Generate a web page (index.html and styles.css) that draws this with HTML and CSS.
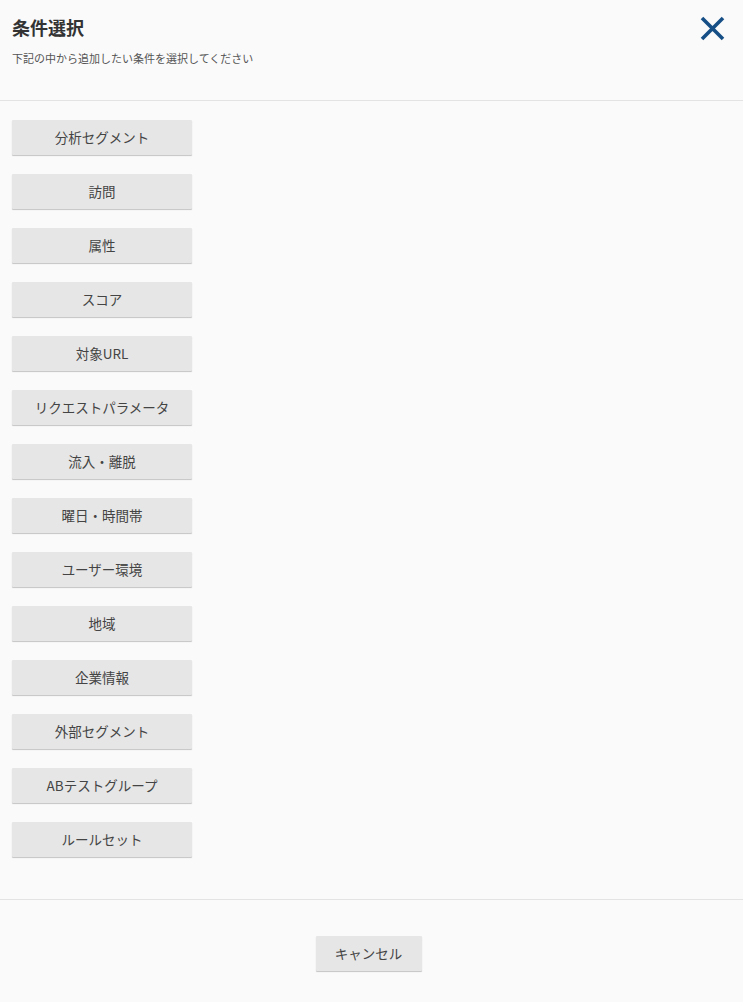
FILE: index.html
```html
<!DOCTYPE html>
<html lang="ja">
<head>
<meta charset="utf-8">
<link rel="stylesheet" href="styles.css">
</head>
<body>
<div class="dialog">
  <header class="head">
    <div class="head-text">
      <h1 class="title">条件選択</h1>
      <p class="sub">下記の中から追加したい条件を選択してください</p>
    </div>
    <button class="close" aria-label="close">
      <svg width="26" height="26" viewBox="0 0 26 26"><path d="M3 3 L24 24 M24 3 L3 24" stroke="#164f85" stroke-width="3.6" fill="none"/></svg>
    </button>
  </header>
  <main class="list">
    <button class="opt">分析セグメント</button>
    <button class="opt">訪問</button>
    <button class="opt">属性</button>
    <button class="opt">スコア</button>
    <button class="opt">対象URL</button>
    <button class="opt">リクエストパラメータ</button>
    <button class="opt">流入・離脱</button>
    <button class="opt">曜日・時間帯</button>
    <button class="opt">ユーザー環境</button>
    <button class="opt">地域</button>
    <button class="opt">企業情報</button>
    <button class="opt">外部セグメント</button>
    <button class="opt">ABテストグループ</button>
    <button class="opt">ルールセット</button>
  </main>
  <footer class="foot">
    <button class="opt cancel">キャンセル</button>
  </footer>
</div>
</body>
</html>
```

FILE: styles.css
```css
html, body {
  margin: 0;
  padding: 0;
  background: #fafafa;
  font-family: "Noto Sans CJK JP", "Noto Sans", sans-serif;
  color: #333;
}
.dialog {
  width: 743px;
  min-height: 1002px;
  display: flex;
  flex-direction: column;
}
.head {
  height: 100px;
  border-bottom: 1px solid #e3e3e3;
  display: flex;
  justify-content: space-between;
  align-items: flex-start;
  padding: 0 12px;
}
.title {
  margin: 14px 0 0;
  font-size: 18px;
  font-weight: 700;
  line-height: 26px;
  color: #333;
}
.sub {
  margin: 10px 0 0;
  font-size: 11px;
  line-height: 16px;
  color: #555;
}
.close {
  background: none;
  border: none;
  padding: 0;
  margin: 15px 6px 0 0;
  width: 26px;
  height: 26px;
  cursor: pointer;
}
.close svg { display: block; }
.list {
  display: flex;
  flex-direction: column;
  align-items: flex-start;
  gap: 19px;
  padding: 19px 12px 42px;
  border-bottom: 1px solid #e3e3e3;
}
.opt {
  width: 180px;
  height: 35px;
  border: none;
  border-radius: 1px;
  background: #e6e6e6;
  box-shadow: 0 1px 1px rgba(0,0,0,0.22);
  font-family: "Noto Sans CJK JP", "Noto Sans", sans-serif;
  font-size: 13.5px;
  color: #444;
  padding: 0 0 2px;
  cursor: pointer;
}
.foot {
  display: flex;
  justify-content: center;
  padding-top: 36px;
}
.cancel {
  width: 106px;
  margin-right: 6px;
}
```
